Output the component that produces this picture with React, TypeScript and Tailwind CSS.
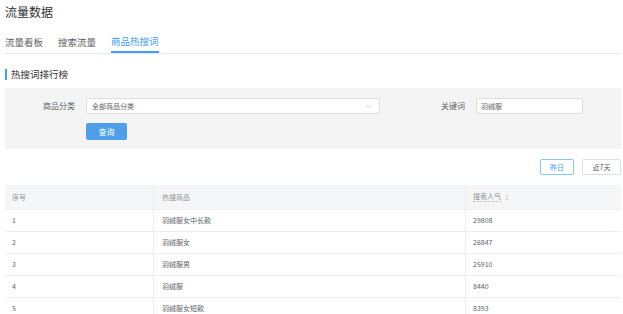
import React from 'react';

const rows = [
  { id: 1, name: '羽绒服女中长款', hot: 29808 },
  { id: 2, name: '羽绒服女', hot: 26847 },
  { id: 3, name: '羽绒服男', hot: 25910 },
  { id: 4, name: '羽绒服', hot: 8440 },
  { id: 5, name: '羽绒服女短款', hot: 8393 },
];

const tabs = ['流量看板', '搜索流量', '商品热搜词'];

const App: React.FC = () => {
  return (
    <div
      className="w-[623px] h-[314px] overflow-hidden bg-white pl-[5px] pr-[2px] text-[#606266]"
      style={{ fontFamily: '"Noto Sans CJK SC", "Noto Sans", sans-serif' }}
    >
      {/* Page title */}
      <div className="h-[24px] flex items-center text-[12px] text-[#303133]">流量数据</div>

      {/* Tabs */}
      <div className="mt-[7px] flex gap-[15px] border-b border-[#e4e7ed]">
        {tabs.map((tab, i) => (
          <div
            key={tab}
            className={`h-[22px] flex items-center text-[9.5px] ${
              i === 2 ? 'text-[#409eff] border-b-2 border-[#409eff] -mb-px' : 'text-[#606266]'
            }`}
          >
            {tab}
          </div>
        ))}
      </div>

      {/* Section title */}
      <div className="mt-[12px] h-[16px] flex items-center">
        <div className="w-[2px] h-[11px] bg-[#409eff]"></div>
        <span className="ml-[4px] text-[9.5px] text-[#303133]">热搜词排行榜</span>
      </div>

      {/* Filter panel */}
      <div className="mt-[6px] h-[61px] bg-[#f4f4f5] pt-[10px]">
        <div className="flex items-center">
          <div className="w-[70px] text-right text-[8px] text-[#606266]">商品分类</div>
          <div className="ml-[11px] w-[294px] h-[16px] bg-white border border-[#dcdfe6] rounded-[2px] flex items-center justify-between pl-[5px] pr-[7px]">
            <span className="text-[7px] text-[#606266]">全部商品分类</span>
            <svg width="7" height="5" viewBox="0 0 7 5" fill="none">
              <path d="M0.5 1l3 3 3-3" stroke="#c0c4cc" strokeWidth="0.7" />
            </svg>
          </div>
          <div className="ml-[61px] w-[27px] text-[8px] text-[#606266]">关键词</div>
          <div className="ml-[8px] w-[107px] h-[16px] bg-white border border-[#dcdfe6] rounded-[2px] flex items-center px-[4px]">
            <span className="text-[7px] text-[#606266]">羽绒服</span>
          </div>
        </div>
        <div className="mt-[9px] ml-[81px]">
          <div className="w-[41px] h-[17px] rounded-[2px] bg-[#4e9ee9] flex items-center justify-center text-[8px] text-white">
            查询
          </div>
        </div>
      </div>

      {/* Date buttons */}
      <div className="mt-[10px] flex justify-end gap-[8px]">
        <div className="w-[34px] h-[16px] border border-[#8cc3f6] rounded-[2px] flex items-center justify-center text-[7px] text-[#409eff]">
          昨日
        </div>
        <div className="w-[39px] h-[16px] border border-[#dcdfe6] rounded-[2px] flex items-center justify-center text-[7px] text-[#606266]">
          近7天
        </div>
      </div>

      {/* Table */}
      <div className="mt-[10px] text-[7px]">
        <div className="grid grid-cols-[149px_312px_155px] h-[25px] bg-[#f5f6f7] border-b border-[#ebeef5] text-[#909399]">
          <div className="flex items-center pl-[7px] border-r border-[#ebeef5]">序号</div>
          <div className="flex items-center pl-[8px] border-r border-[#ebeef5]">热搜商品</div>
          <div className="flex items-center pl-[7px]">
            <span className="border-b border-dotted border-[#b4b7bd] leading-[9px]">搜索人气</span>
            <svg className="ml-[4px]" width="4" height="7" viewBox="0 0 4 7">
              <path d="M2 0.5L3.5 2.5H0.5Z" fill="#c0c4cc" />
              <path d="M2 6.5L3.5 4.5H0.5Z" fill="#c0c4cc" />
            </svg>
          </div>
        </div>
        {rows.map((row) => (
          <div
            key={row.id}
            className="grid grid-cols-[149px_312px_155px] h-[22px] border-b border-[#ebeef5] text-[#606266]"
          >
            <div className="flex items-center pl-[7px] border-r border-[#ebeef5]">{row.id}</div>
            <div className="flex items-center pl-[8px] border-r border-[#ebeef5]">{row.name}</div>
            <div className="flex items-center pl-[7px]">{row.hot}</div>
          </div>
        ))}
      </div>
    </div>
  );
};

export default App;
